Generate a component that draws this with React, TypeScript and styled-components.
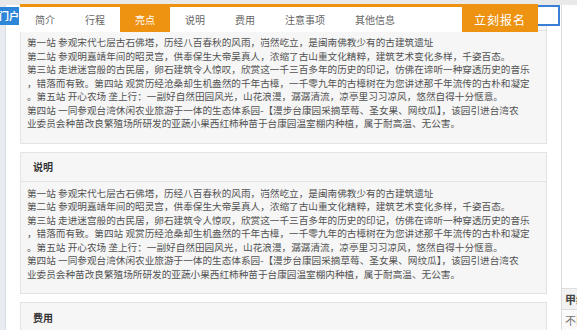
import { createGlobalStyle, styled } from 'styled-components';

const ORANGE = '#ee9212';

const GlobalStyle = createGlobalStyle`
  html, body {
    margin: 0;
    padding: 0;
    background: #ffffff;
    overflow: hidden;
  }
  body {
    font-family: 'Noto Sans CJK SC', 'Noto Sans', sans-serif;
    color: #555;
  }
`;

const Page = styled.div`
  display: flex;
  width: 577px;
  height: 330px;
  overflow: hidden;
`;

const LeftRail = styled.div`
  width: 5px;
  flex-shrink: 0;
  background: #e8ecf1;
  border-right: 1px solid #d6dce3;
`;

const Main = styled.div`
  width: 527px;
  flex-shrink: 0;
  margin-left: 14px;
  padding-top: 1px;
  display: flex;
  flex-direction: column;
  gap: 8px;
`;

const Panel = styled.section`
  background: #f6f6f6;
  border: 1px solid #e3e3e3;
`;

const PanelHeader = styled.div`
  height: 28px;
  padding-left: 12px;
  display: flex;
  align-items: center;
  border-bottom: 1px solid #e3e3e3;
  font-size: 10px;
  font-weight: 700;
  color: #333;
`;

const PanelBody = styled.div`
  padding: 5px 0 12px 6px;
`;

const Line = styled.div`
  font-size: 9.65px;
  line-height: 13.5px;
  white-space: nowrap;
  color: #525252;
`;

const Sidebar = styled.aside`
  margin-left: 14px;
  flex: 1;
  border-left: 1px solid #dcdcdc;
  display: flex;
  flex-direction: column;
  justify-content: flex-end;
`;

const SideRow = styled.div<{ $shaded?: boolean }>`
  height: 20px;
  padding-left: 3px;
  display: flex;
  align-items: center;
  border-top: 1px solid #dedede;
  background: ${(p) => (p.$shaded ? '#f2f2f2' : '#fafafa')};
  font-size: 11px;
  font-weight: ${(p) => (p.$shaded ? 700 : 400)};
  color: ${(p) => (p.$shaded ? '#444' : '#777')};
  white-space: nowrap;
  overflow: hidden;
`;

const TopShade = styled.div`
  position: fixed;
  top: 0;
  left: 0;
  right: 0;
  height: 5px;
  background: #e9e9e9;
`;

const PortalTag = styled.div`
  position: fixed;
  top: 7px;
  left: 0;
  width: 19px;
  height: 18px;
  overflow: hidden;
  background: #2d86d8;
  color: #fff;
  font-size: 10px;
  font-weight: 700;
  line-height: 18px;
  display: flex;
  justify-content: flex-end;
  white-space: nowrap;
`;

const SearchBox = styled.div`
  position: fixed;
  top: 5px;
  left: 520px;
  width: 36px;
  height: 17px;
  background: #fff;
  border: 2px solid #3a7fd6;
`;

const NavBar = styled.nav`
  position: fixed;
  top: 4px;
  left: 20px;
  width: 518px;
  height: 25px;
  border-top: 3px solid ${ORANGE};
  background: #fff;
  display: flex;
  align-items: stretch;
`;

const Tab = styled.div<{ $active?: boolean }>`
  padding: 0 15px;
  display: flex;
  align-items: center;
  font-size: 10px;
  color: ${(p) => (p.$active ? '#fff' : '#666')};
  background: ${(p) => (p.$active ? ORANGE : 'transparent')};
  white-space: nowrap;
`;

const SignUpButton = styled.div`
  margin-left: auto;
  width: 76px;
  display: flex;
  align-items: center;
  justify-content: center;
  background: ${ORANGE};
  color: #fff;
  font-size: 12px;
  letter-spacing: 1px;
`;

const TABS = ['简介', '行程', '亮点', '说明', '费用', '注意事项', '其他信息'];

const LINES = [
  '第一站 参观宋代七层古石佛塔，历经八百春秋的风雨，岿然屹立，是闽南佛教少有的古建筑遗址',
  '第二站 参观明嘉靖年间的昭灵宫，供奉保生大帝吴真人，浓缩了古山重文化精粹，建筑艺术变化多样，千姿百态。',
  '第三站 走进迷宫般的古民居，卵石建筑令人惊叹，欣赏这一千三百多年的历史的印记，仿佛在谛听一种穿透历史的音乐',
  '，错落而有致。第四站 观赏历经沧桑却生机盎然的千年古樟，一千零九年的古樟树在为您讲述那千年流传的古朴和凝定',
  '。第五站 开心农场 垄上行：一副好自然田园风光，山花浪漫，潺潺清流，凉亭里习习凉风，悠然自得十分惬意。',
  '第四站 一同参观台湾休闲农业旅游于一体的生态体系园-【漫步台康园采摘草莓、圣女果、网纹瓜】，该园引进台湾农',
  '业委员会种苗改良繁殖场所研发的亚蔬小果西红柿种苗于台康园温室棚内种植，属于耐高温、无公害。',
];

const SECTIONS = ['亮点', '说明', '费用'];

function App() {
  return (
    <>
      <GlobalStyle />
      <Page>
        <LeftRail />
        <Main>
          {SECTIONS.map((title) => (
            <Panel key={title}>
              <PanelHeader>{title}</PanelHeader>
              <PanelBody>
                {LINES.map((line, index) => (
                  <Line key={index}>{line}</Line>
                ))}
              </PanelBody>
            </Panel>
          ))}
        </Main>
        <Sidebar>
          <SideRow $shaded>甲级</SideRow>
          <SideRow>不限</SideRow>
        </Sidebar>
      </Page>
      <TopShade />
      <PortalTag>门户</PortalTag>
      <SearchBox />
      <NavBar>
        {TABS.map((tab) => (
          <Tab key={tab} $active={tab === '亮点'}>
            {tab}
          </Tab>
        ))}
        <SignUpButton>立刻报名</SignUpButton>
      </NavBar>
    </>
  );
}

export default App;
